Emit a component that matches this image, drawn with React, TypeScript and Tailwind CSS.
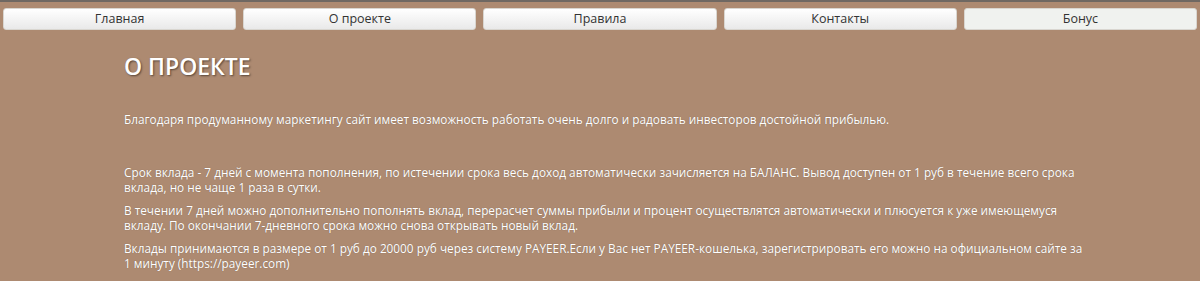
import React from "react";

const menu = ["Главная", "О проекте", "Правила", "Контакты", "Бонус"];

const paragraphs = [
  "Срок вклада - 7 дней с момента пополнения, по истечении срока весь доход автоматически зачисляется на БАЛАНС. Вывод доступен от 1 руб в течение всего срока вклада, но не чаще 1 раза в сутки.",
  "В течении 7 дней можно дополнительно пополнять вклад, перерасчет суммы прибыли и процент осуществлятся автоматически и плюсуется к уже имеющемуся вкладу. По окончании 7-дневного срока можно снова открывать новый вклад.",
  "Вклады принимаются в размере от 1 руб до 20000 руб через систему PAYEER.Если у Вас нет PAYEER-кошелька, зарегистрировать его можно на официальном сайте за 1\u00a0минуту (https://payeer.com)",
];

const App = () => {
  return (
    <div className="min-h-[281px] w-full bg-[#ad8a71] border-t-2 border-[#6f6862] font-['Open_Sans',sans-serif]">
      {/* NAV */}
      <nav className="flex gap-[7px] px-[3px] pt-[6px]">
        {menu.map((item, i) => (
          <a
            key={item}
            href="#"
            className={
              i === menu.length - 1
                ? "flex-1 h-[22px] flex items-center justify-center rounded-[3px] border border-[#d9d6d0] bg-[#f0f2ef] text-[12.5px] text-[#333]"
                : "flex-1 h-[22px] flex items-center justify-center rounded-[3px] border border-[#d9d6d0] bg-gradient-to-b from-white to-[#e9e9e9] text-[12.5px] text-[#333]"
            }
          >
            {item}
          </a>
        ))}
      </nav>

      {/* CONTENT */}
      <div className="ml-[124px] w-[964px] text-white">
        <h1 className="mt-[20px] text-[23px] font-semibold leading-[32px] [text-shadow:1px_1px_2px_rgba(0,0,0,0.5)]">
          О ПРОЕКТЕ
        </h1>
        <p className="mt-[30px] text-[11.8px] leading-[15px] [text-shadow:0_0_1px_rgba(0,0,0,0.3)]">
          Благодаря продуманному маркетингу сайт имеет возможность работать очень долго и радовать инвесторов достойной прибылью.
        </p>
        <div className="mt-[38px] flex flex-col gap-[8px]">
          {paragraphs.map((text, i) => (
            <p key={i} className="text-[11.8px] leading-[15px] [text-shadow:0_0_1px_rgba(0,0,0,0.3)]">
              {text}
            </p>
          ))}
        </div>
      </div>
    </div>
  );
};

export default App;
